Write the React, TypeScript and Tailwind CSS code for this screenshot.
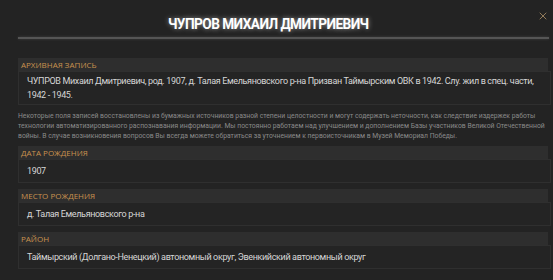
import { X } from "lucide-react";

interface FieldProps {
    label: string;
    children: React.ReactNode;
}

const Field = ({ label, children }: FieldProps) => {
    return (
        <div className="flex flex-col">
            <div
                className="h-[13px] mr-[3px] bg-[#2e2e2e] pl-[3px] flex items-center text-[8px] uppercase text-[#c9924e] leading-none"
                style={{ fontFamily: '"Open Sans", sans-serif' }}
            >
                {label}
            </div>
            <div className="min-h-[24px] flex flex-col justify-center border border-[#2f2f2f] bg-[#242424] pl-[8px] pr-[6px] py-[2px] text-[9px] tracking-[-0.35px] leading-[14px] text-[#d6d6d6]">
                <div>{children}</div>
            </div>
        </div>
    );
};

export default function App() {
    return (
        <div
            className="w-[553px] h-[280px] overflow-hidden bg-[#232323] pl-[18px] pr-[2px]"
            style={{ fontFamily: 'Roboto, "Noto Sans", sans-serif' }}
        >
            <div className="relative flex justify-center pt-[14px] pr-[32px]">
                <h1 className="scale-x-[0.91] text-[15px] font-bold text-white leading-[20px] tracking-[-0.6px] [text-shadow:0_0_6px_rgba(255,255,255,0.55)]">
                    ЧУПРОВ МИХАИЛ ДМИТРИЕВИЧ
                </h1>
                <X
                    className="absolute right-[2px] top-[10px] text-[#b8996e]"
                    size={12}
                    strokeWidth={1.5}
                />
            </div>
            <div className="mt-[3px] mr-[2px] h-[2px] bg-[#555555] shadow-[0_0_3px_rgba(255,255,255,0.15)]" />

            <div className="mt-[19px] flex flex-col">
                <Field label="Архивная запись">
                    ЧУПРОВ Михаил Дмитриевич, род. 1907, д. Талая Емельяновского р-на Призван Таймырским ОВК в 1942. Слу. жил в спец. части, 1942 - 1945.
                </Field>

                <p className="mt-[6px] pr-[2px] text-[6.8px] leading-[10px] text-[#8a8a8a]">
                    Некоторые поля записей восстановлены из бумажных источников разной степени целостности и могут содержать неточности, как следствие издержек работы технологии автоматизированного распознавания информации. Мы постоянно работаем над улучшением и дополнением Базы участников Великой Отечественной войны. В случае возникновения вопросов Вы всегда можете обратиться за уточнением к первоисточникам в Музей Мемориал Победы.
                </p>

                <div className="mt-[5px] flex flex-col gap-[6px]">
                    <Field label="Дата рождения">1907</Field>
                    <Field label="Место рождения">д. Талая Емельяновского р-на</Field>
                    <Field label="Район">
                        Таймырский (Долгано-Ненецкий) автономный округ, Эвенкийский автономный округ
                    </Field>
                </div>
            </div>
        </div>
    );
}
